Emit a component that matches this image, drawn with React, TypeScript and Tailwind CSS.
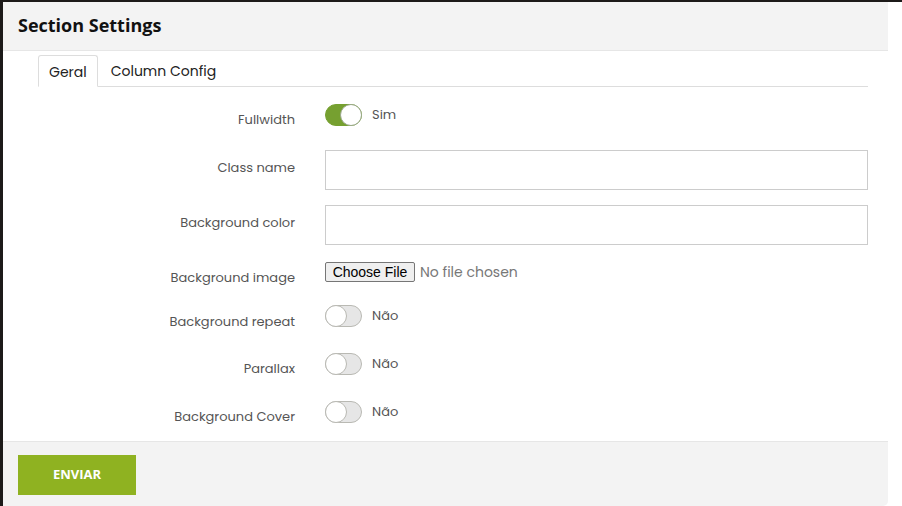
const font = "font-['Poppins','Inter',sans-serif]";

function Toggle({ on }: { on: boolean }) {
  return (
    <div className="flex items-center gap-[10px]">
      <div
        className={`relative w-[37px] h-[22px] rounded-full border ${
          on ? 'bg-[#76a030] border-[#76a030]' : 'bg-[#e6e6e6] border-[#b9b9b3]'
        }`}
      >
        <div
          className={`absolute top-[-1px] w-[22px] h-[22px] rounded-full bg-white border ${
            on ? 'right-[-1px] border-[#9aa88a]' : 'left-[-1px] border-[#b9b9b3]'
          }`}
        />
      </div>
      <span className="text-[13px] text-[#555] -mt-[1px]">{on ? 'Sim' : 'Não'}</span>
    </div>
  );
}

function Row({ label, h, pad, children }: { label: string; h: string; pad: string; children: React.ReactNode }) {
  return (
    <div className={`flex items-start ${h}`}>
      <div className={`w-[257px] text-right text-[13px] leading-[20px] text-[#555] ${pad}`}>{label}</div>
      <div className="ml-[30px] flex-1">{children}</div>
    </div>
  );
}

export default function App() {
  return (
    <div className={`w-[902px] h-[506px] flex flex-col bg-white overflow-hidden ${font}`}>
      <div className="h-[2px] bg-[#1c1a19]" />
      <div className="flex flex-1">
        <div className="w-[3px] bg-[#1c1a19]" />
        <div className="w-[885px] flex flex-col bg-white rounded-br-[5px] overflow-hidden">
          <div className="h-[49px] bg-[#f3f3f3] border-b border-[#e6e6e6] pl-[15px] pt-[10px]">
            <h2 className="font-['Open_Sans',sans-serif] font-bold text-[18px] text-[#111] leading-[26px]">
              Section Settings
            </h2>
          </div>
          <div className="h-[390px] pl-[35px] pr-[20px] pt-[4px]">
            <div className="flex border-b border-[#ddd] h-[32px]">
              <div className="h-[32px] px-[10px] border border-b-white border-[#ddd] rounded-t-[3px] bg-white text-[14px] text-[#222] leading-[32px]">
                Geral
              </div>
              <div className="h-[32px] px-[13px] text-[14px] text-[#222] leading-[32px]">Column Config</div>
            </div>
            <div className="flex flex-col pt-[17px]">
              <Row label="Fullwidth" h="h-[46px]" pad="pt-[6px]">
                <Toggle on />
              </Row>
              <Row label="Class name" h="h-[55px]" pad="pt-[8px]">
                <input className="w-full h-[40px] border border-[#ccc] outline-none" />
              </Row>
              <Row label="Background color" h="h-[57px]" pad="pt-[8px]">
                <input className="w-full h-[40px] border border-[#ccc] outline-none" />
              </Row>
              <Row label="Background image" h="h-[43px]" pad="pt-[6px]">
                <div className="flex items-center gap-[5px] h-[20px]">
                  <button className="w-[90px] h-[20px] border border-[#767676] rounded-[2px] bg-[#efefef] font-['Liberation_Sans',sans-serif] text-[14px] text-black leading-[18px]">
                    Choose File
                  </button>
                  <span className="text-[14px] text-[#777]">No file chosen</span>
                </div>
              </Row>
              <Row label="Background repeat" h="h-[48px]" pad="pt-[7px]">
                <Toggle on={false} />
              </Row>
              <Row label="Parallax" h="h-[48px]" pad="pt-[6px]">
                <Toggle on={false} />
              </Row>
              <Row label="Background Cover" h="h-[40px]" pad="pt-[6px]">
                <Toggle on={false} />
              </Row>
            </div>
          </div>
          <div className="flex-1 bg-[#f3f3f3] border-t border-[#e6e6e6] pl-[15px] pt-[13px]">
            <button className="w-[118px] h-[40px] bg-[#8fb221] text-white font-['Open_Sans',sans-serif] font-bold text-[13px]">
              ENVIAR
            </button>
          </div>
        </div>
        <div className="flex-1 bg-white" />
      </div>
    </div>
  );
}
